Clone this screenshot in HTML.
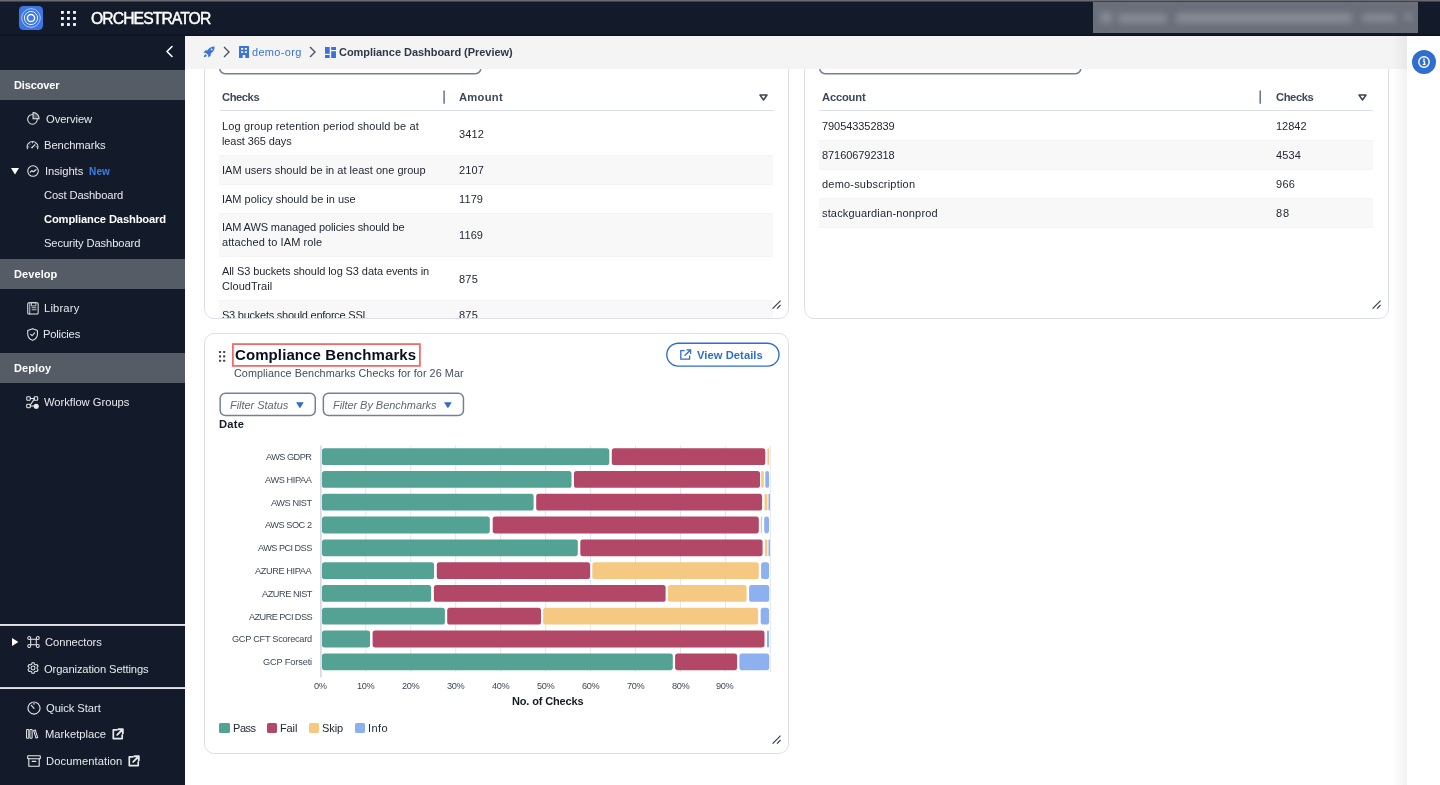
<!DOCTYPE html>
<html><head><meta charset="utf-8"><title>Orchestrator - Compliance Dashboard</title>
<style>
*{box-sizing:border-box;margin:0;padding:0}
html,body{width:1440px;height:785px;overflow:hidden;background:#fff;font-family:"Liberation Sans",sans-serif;}
.abs{position:absolute}
#topline{position:absolute;left:0;top:0;width:1440px;height:2px;background:linear-gradient(#67696e 0,#67696e 50%,#3e434d 50%,#3e434d 100%);z-index:5}
#topbar{position:absolute;left:0;top:2px;width:1440px;height:34px;background:#131b2a;z-index:4}
#sidebar{position:absolute;left:0;top:36px;width:184.5px;height:749px;background:#131b2a;z-index:3}
#main{position:absolute;left:184px;top:36px;width:1256px;height:749px;background:#fff;overflow:hidden}
#crumb{position:absolute;left:0;top:0;width:1223px;height:33px;background:#f4f4f4;z-index:2}
.t{position:absolute;white-space:nowrap;line-height:1;will-change:transform}
.sec{position:absolute;left:0;width:184.5px;height:30px;background:#555c66}
.card{position:absolute;border:1px solid #dcdfe6;background:#fff}
</style></head><body>
<div id="topline"></div>
<div id="topbar">
<svg class="abs" style="left:19px;top:4px" width="24" height="24" viewBox="0 0 24 24"><rect width="24" height="24" rx="4.5" fill="#3b75e6"/><g fill="none" stroke="#fff"><circle cx="12" cy="12" r="3.6" stroke-width="1.5"/><circle cx="12" cy="12" r="6.6" stroke-width="0.9"/><circle cx="12" cy="12" r="9.3" stroke-width="0.6"/></g></svg>
<svg class="abs" style="left:61px;top:9px" width="15" height="15" viewBox="0 0 15 15" fill="#fff"><rect x="0" y="0" width="2.8" height="2.8"/><rect x="6.05" y="0" width="2.8" height="2.8"/><rect x="12.1" y="0" width="2.8" height="2.8"/><rect x="0" y="6.05" width="2.8" height="2.8"/><rect x="6.05" y="6.05" width="2.8" height="2.8"/><rect x="12.1" y="6.05" width="2.8" height="2.8"/><rect x="0" y="12.1" width="2.8" height="2.8"/><rect x="6.05" y="12.1" width="2.8" height="2.8"/><rect x="12.1" y="12.1" width="2.8" height="2.8"/></svg>
<div class="t " style="left:90.60px;top:8px;font-size:15.7px;line-height:17px;color:#fff;letter-spacing:-0.901px;-webkit-text-stroke:0.45px #fff;">ORCHESTRATOR</div>
<div class="abs" id="blur" style="left:1092.8px;top:-0.3px;width:325.3px;height:31.4px;background:#6a6f79;overflow:hidden"><div class="abs" style="left:0;top:0;width:100%;height:100%;filter:blur(3px)"><div class="abs" style="left:7px;top:10px;width:12px;height:11px;border-radius:4px;background:#878b94"></div><div class="abs" style="left:25px;top:12px;width:49px;height:9px;border-radius:4px;background:#878b94"></div><div class="abs" style="left:83px;top:11px;width:176px;height:10px;border-radius:4px;background:#878b94"></div><div class="abs" style="left:269px;top:12px;width:34px;height:8px;border-radius:4px;background:#878b94"></div><div class="abs" style="left:312px;top:11px;width:7px;height:8px;border-radius:4px;background:#878b94"></div></div></div>
<div class="abs" style="left:0;top:31.4px;width:1440px;height:2.6px;background:linear-gradient(#131b2a,#0b121e)"></div>
</div>
<div id="sidebar">
<svg class="abs" style="left:165.00px;top:9.00px" width="9.00" height="13.00" viewBox="0 0 9 13" fill="none" stroke="#e9eaec" stroke-width="1.1" stroke-linecap="round" stroke-linejoin="round" ><path d="M7 1.5 L2 6.5 L7 11.5" stroke="#fff" stroke-width="1.6"/></svg>
<div class="sec" style="top:34px"></div>
<div class="t " style="left:14.00px;top:43px;font-size:11px;line-height:12px;color:#fff;letter-spacing:-0.139px;font-weight:bold;">Discover</div>
<svg class="abs" style="left:26.92px;top:76.49px" width="13.95" height="13.02" viewBox="0 0 15 14" fill="none" stroke="#e9eaec" stroke-width="1.1" stroke-linecap="round" stroke-linejoin="round" ><path d="M5.9 2.7 A5.2 5.2 0 1 0 11.1 7.9"/><path d="M6.5 7.2 V0.6 A6.6 6.6 0 0 1 13.1 7.2 Z" fill="rgba(233,234,236,0.28)"/></svg>
<div class="t " style="left:45.60px;top:77px;font-size:11.2px;line-height:12px;color:#e9eaec;letter-spacing:-0.068px;">Overview</div>
<svg class="abs" style="left:26.39px;top:103.88px" width="13.02" height="10.23" viewBox="0 0 14 11" fill="none" stroke="#e9eaec" stroke-width="1.1" stroke-linecap="round" stroke-linejoin="round" ><path d="M1.55 9.4 A5.8 5.8 0 1 1 12.45 9.4"/><path d="M6.7 7.9 L9.5 5.3" stroke-width="1.3"/><circle cx="6.5" cy="8.1" r="0.9" fill="#e9eaec" stroke="none"/><path d="M7 2.3v1M3.4 3.9l.7.7M10.6 3.9l-.7.7M2.1 7.3h1M11.9 7.3h-1" stroke-width="0.8"/></svg>
<div class="t " style="left:44.10px;top:103px;font-size:11.2px;line-height:12px;color:#e9eaec;letter-spacing:-0.072px;">Benchmarks</div>
<svg class="abs" style="left:11px;top:132.4px" width="8" height="6.4" viewBox="0 0 8 6.4"><path d="M0 0H8L4 6.4Z" fill="#fff"/></svg>
<svg class="abs" style="left:27.25px;top:129.06px" width="12.09" height="12.09" viewBox="0 0 13 13" fill="none" stroke="#e9eaec" stroke-width="1.1" stroke-linecap="round" stroke-linejoin="round" ><circle cx="6.5" cy="6.5" r="5.7"/><path d="M3.5 7.7 L5.3 6.1 L6.9 7.2 L9.6 5.1" stroke-width="1.3"/></svg>
<div class="t " style="left:44.80px;top:129px;font-size:11.2px;line-height:12px;color:#e9eaec;letter-spacing:-0.043px;">Insights</div>
<div class="t " style="left:88.80px;top:130px;font-size:10px;line-height:11px;color:#3d7fe6;letter-spacing:0.169px;font-weight:bold;">New</div>
<div class="t " style="left:44.40px;top:153px;font-size:11.2px;line-height:12px;color:#e9eaec;letter-spacing:-0.126px;">Cost Dashboard</div>
<div class="t " style="left:44.40px;top:177px;font-size:11.2px;line-height:12px;color:#fff;letter-spacing:-0.147px;font-weight:bold;">Compliance Dashboard</div>
<div class="t " style="left:44.40px;top:201px;font-size:11.2px;line-height:12px;color:#e9eaec;letter-spacing:-0.109px;">Security Dashboard</div>
<div class="sec" style="top:223px"></div>
<div class="t " style="left:14.00px;top:232px;font-size:11px;line-height:12px;color:#fff;letter-spacing:0.085px;font-weight:bold;">Develop</div>
<svg class="abs" style="left:27.05px;top:265.69px" width="12.09" height="13.02" viewBox="0 0 13 14" fill="none" stroke="#e9eaec" stroke-width="1.1" stroke-linecap="round" stroke-linejoin="round" ><rect x="0.8" y="0.8" width="11.2" height="12.2" rx="1.2"/><path d="M3 0.8V13M5.2 0.8h4.4v3.4H5.2z M5.5 6.2h4.2M5.5 8.4h4.2" stroke-width="0.9"/></svg>
<div class="t " style="left:44.20px;top:266px;font-size:11.2px;line-height:12px;color:#e9eaec;letter-spacing:0.178px;">Library</div>
<svg class="abs" style="left:26.62px;top:292.29px" width="11.16" height="13.02" viewBox="0 0 12 14" fill="none" stroke="#e9eaec" stroke-width="1.1" stroke-linecap="round" stroke-linejoin="round" ><path d="M6 0.8 L11.2 2.6 V6.6 C11.2 9.8 9 12 6 13.2 C3 12 0.8 9.8 0.8 6.6 V2.6 Z"/><path d="M4 6.8 L5.5 8.3 L8.2 5.2"/></svg>
<div class="t " style="left:43.40px;top:292px;font-size:11.2px;line-height:12px;color:#e9eaec;letter-spacing:-0.185px;">Policies</div>
<div class="sec" style="top:317px"></div>
<div class="t " style="left:14.00px;top:326px;font-size:11px;line-height:12px;color:#fff;letter-spacing:0.105px;font-weight:bold;">Deploy</div>
<svg class="abs" style="left:26.49px;top:360.09px" width="13.02" height="13.02" viewBox="0 0 14 14" fill="none" stroke="#e9eaec" stroke-width="1.1" stroke-linecap="round" stroke-linejoin="round" ><rect x="0.8" y="0.8" width="3.8" height="3.8" rx="0.8"/><rect x="8.8" y="0.8" width="3.8" height="3.8" rx="0.8"/><rect x="0.8" y="8.8" width="3.8" height="3.8" rx="0.8"/><circle cx="11" cy="11" r="2.2" fill="#e9eaec"/><path d="M4.6 2.7H8.8M4.6 10.7H8.8M8.8 3.6L4.6 9.6"/></svg>
<div class="t " style="left:44.20px;top:360px;font-size:11.2px;line-height:12px;color:#e9eaec;letter-spacing:-0.013px;">Workflow Groups</div>
<div class="abs" style="left:0;top:588px;width:184.5px;height:2px;background:linear-gradient(#e2e3e6 0,#e2e3e6 70%,#7d828b 100%)"></div>
<svg class="abs" style="left:11.6px;top:602px" width="6.6" height="8" viewBox="0 0 6.6 8"><path d="M0 0V8L6.6 4Z" fill="#fff"/></svg>
<svg class="abs" style="left:26.89px;top:600.25px" width="13.02" height="12.09" viewBox="0 0 14 13" fill="none" stroke="#e9eaec" stroke-width="1.1" stroke-linecap="round" stroke-linejoin="round" ><rect x="4" y="3.6" width="6" height="5.8"/><circle cx="2.4" cy="2.2" r="1.6"/><circle cx="11.6" cy="2.2" r="1.6"/><circle cx="2.4" cy="10.8" r="1.6"/><circle cx="11.6" cy="10.8" r="1.6"/></svg>
<div class="t " style="left:44.80px;top:600px;font-size:11.2px;line-height:12px;color:#e9eaec;letter-spacing:-0.042px;">Connectors</div>
<svg class="abs" style="left:26.66px;top:626.46px" width="12.09" height="12.09" viewBox="0 0 13 13" fill="none" stroke="#e9eaec" stroke-width="1.1" stroke-linecap="round" stroke-linejoin="round" ><path d="M5.4 0.9h2.2l.45 1.55 1.25.7 1.55-.4 1.1 1.9-1.1 1.15v1.4l1.1 1.15-1.1 1.9-1.55-.4-1.25.7-.45 1.55H5.4l-.45-1.55-1.25-.7-1.55.4-1.1-1.9 1.1-1.15V5.8L1.05 4.65l1.1-1.9 1.55.4 1.25-.7z"/><circle cx="6.5" cy="6.5" r="2.1"/></svg>
<div class="t " style="left:44.20px;top:627px;font-size:11.2px;line-height:12px;color:#e9eaec;letter-spacing:-0.114px;">Organization Settings</div>
<div class="abs" style="left:0;top:651px;width:184.5px;height:2px;background:linear-gradient(#9fa3aa 0,#e2e3e6 35%,#e2e3e6 100%)"></div>
<svg class="abs" style="left:26.50px;top:664.60px" width="14.00" height="14.00" viewBox="0 0 14 14" fill="none" stroke="#e9eaec" stroke-width="1.1" stroke-linecap="round" stroke-linejoin="round" ><path d="M5.4 1.3 A6 6 0 1 0 8.6 1.3"/><path d="M7 0.8v2.4M7 7.4 L4.4 4.4" /></svg>
<div class="t " style="left:45.70px;top:666px;font-size:11.2px;line-height:12px;color:#e9eaec;letter-spacing:-0.059px;">Quick Start</div>
<svg class="abs" style="left:26.47px;top:693.37px" width="12.56" height="9.77" viewBox="0 0 13.5 10.5" fill="none" stroke="#e9eaec" stroke-width="1.1" stroke-linecap="round" stroke-linejoin="round" ><rect x="0.6" y="0.6" width="2.4" height="9.3" rx="0.8"/><rect x="4.2" y="0.6" width="2.4" height="9.3" rx="0.8"/><path d="M8.2 1.6 L10 1 L12.6 9.2 L10.8 9.8 Z"/></svg>
<div class="t " style="left:44.80px;top:692px;font-size:11.2px;line-height:12px;color:#e9eaec;letter-spacing:0.010px;">Marketplace</div>
<svg class="abs" style="left:112.00px;top:692.20px" width="12.00" height="12.00" viewBox="0 0 12 12" fill="none" stroke="#e9eaec" stroke-width="1.1" stroke-linecap="round" stroke-linejoin="round" stroke-linecap="butt" stroke-linejoin="miter"><path d="M5 1.8H1.3V10.6H10.2V7" stroke-width="1.7"/><path d="M6.4 1.2H10.8V5.6M10.4 1.6L5.2 6.8" stroke-width="1.9"/></svg>
<svg class="abs" style="left:26.50px;top:719.40px" width="14.00" height="12.00" viewBox="0 0 14 12" fill="none" stroke="#e9eaec" stroke-width="1.1" stroke-linecap="round" stroke-linejoin="round" ><rect x="0.7" y="0.7" width="12.6" height="3" rx="0.4"/><path d="M1.8 3.7V11.3H12.2V3.7M5.2 6.4H8.8"/></svg>
<div class="t " style="left:45.70px;top:719px;font-size:11.2px;line-height:12px;color:#e9eaec;letter-spacing:0.089px;">Documentation</div>
<svg class="abs" style="left:128.40px;top:718.70px" width="12.00" height="12.00" viewBox="0 0 12 12" fill="none" stroke="#e9eaec" stroke-width="1.1" stroke-linecap="round" stroke-linejoin="round" stroke-linecap="butt" stroke-linejoin="miter"><path d="M5 1.8H1.3V10.6H10.2V7" stroke-width="1.7"/><path d="M6.4 1.2H10.8V5.6M10.4 1.6L5.2 6.8" stroke-width="1.9"/></svg>
</div>
<div id="main">
<div id="crumb">
<svg class="abs" style="left:19px;top:10px" width="12" height="12" viewBox="0 0 12 12"><path d="M11.6 0.4 C8.6 0.3 6.3 1.5 4.6 4.2 L2.2 4.4 L0.5 6.6 L2.9 6.9 L5.1 9.1 L5.4 11.5 L7.6 9.8 L7.8 7.4 C10.5 5.7 11.7 3.4 11.6 0.4 Z M2.6 8.2 C1.5 8.6 1 9.6 0.8 11.2 C2.4 11 3.4 10.5 3.8 9.4 Z" fill="#3b73d9"/><circle cx="8.6" cy="3.4" r="0.9" fill="#f4f4f4"/></svg>
<svg class="abs" style="left:38.599999999999994px;top:10.200000000000003px" width="8" height="12" viewBox="0 0 8 12"><path d="M1 1 L6 6 L1 11" fill="none" stroke="#4a5361" stroke-width="1.4"/></svg>
<svg class="abs" style="left:55px;top:10px" width="10" height="12" viewBox="0 0 10 12"><path d="M0 0.8 Q0 0 0.8 0 H9.2 Q10 0 10 0.8 V12 H6.3 V9 H3.7 V12 H0 Z" fill="#3b73d9"/><g fill="#f4f4f4"><rect x="2" y="2" width="2.2" height="1.7"/><rect x="5.8" y="2" width="2.2" height="1.7"/><rect x="2" y="5.2" width="2.2" height="1.7"/><rect x="5.8" y="5.2" width="2.2" height="1.7"/></g></svg>
<div class="t " style="left:68.30px;top:10px;font-size:11px;line-height:12px;color:#3b73d9;letter-spacing:0.317px;">demo-org</div>
<svg class="abs" style="left:125.19999999999999px;top:10.200000000000003px" width="8" height="12" viewBox="0 0 8 12"><path d="M1 1 L6 6 L1 11" fill="none" stroke="#4a5361" stroke-width="1.4"/></svg>
<svg class="abs" style="left:141px;top:10.600000000000001px" width="11" height="11.4" viewBox="0 0 11 11.4" fill="#3b73d9"><rect x="0" y="0" width="4.7" height="6.8"/><rect x="0" y="8" width="4.7" height="3.4"/><rect x="6.2" y="0" width="4.8" height="3"/><rect x="6.2" y="4.2" width="4.8" height="7.2"/></svg>
<div class="t " style="left:154.90px;top:10px;font-size:11px;line-height:12px;color:#2d3848;letter-spacing:-0.039px;font-weight:bold;">Compliance Dashboard (Preview)</div>
</div>
<div class="abs" style="left:1208px;top:0;width:15px;height:749px;background:linear-gradient(90deg,rgba(0,0,0,0),rgba(0,0,0,0.05));z-index:2"></div>
<div class="abs" style="left:1223px;top:0;width:33px;height:749px;background:#fff;z-index:2"></div>
<svg class="abs" style="left:1227.5px;top:14.399999999999999px;z-index:3" width="24" height="24" viewBox="0 0 24 24"><circle cx="12" cy="12" r="12" fill="#2f6dd1"/><circle cx="12" cy="12" r="5.2" fill="none" stroke="#fff" stroke-width="1.4"/><circle cx="12" cy="9.5" r="0.95" fill="#fff"/><path d="M10.9 11.4H12.5V14.2M10.7 14.3H13.6" stroke="#fff" stroke-width="1.3" fill="none"/></svg>
<div class="card" style="left:20px;top:4px;width:585px;height:279px;border-radius:0 0 10px 10px;overflow:hidden">
<svg class="abs" style="left:14px;top:9px" width="264" height="26" viewBox="0 0 264 26"><rect x="0.75" y="0.75" width="261.00" height="22.90" rx="5.2" fill="none" stroke="#74809a" stroke-width="1.5"/></svg>
<div class="t " style="left:17.15px;top:50px;font-size:11.2px;line-height:12px;color:#3d4859;letter-spacing:-0.439px;font-weight:bold;">Checks</div>
<svg class="abs" style="left:237px;top:49px" width="4" height="15" viewBox="0 0 4 15"><line x1="2.1" y1="0.6" x2="2.1" y2="13.8" stroke="#66728a" stroke-width="1.5"/></svg>
<div class="t " style="left:254.20px;top:50px;font-size:11.2px;line-height:12px;color:#3d4859;letter-spacing:0.280px;font-weight:bold;">Amount</div>
<svg class="abs" style="left:553.5px;top:52.5px" width="9" height="7" viewBox="0 0 9 7"><path d="M1 1 H8 L4.5 6 Z" fill="none" stroke="#3c4657" stroke-width="1.5" stroke-linejoin="round"/></svg>
<div class="abs" style="left:14.5px;top:69px;width:554.3px;height:1px;background:#dde1e8"></div>
<div class="t " style="left:17.10px;top:79px;font-size:11px;line-height:12px;color:#1d2330;letter-spacing:0.123px;">Log group retention period should be at</div>
<div class="t " style="left:17.10px;top:94px;font-size:11px;line-height:12px;color:#1d2330;letter-spacing:-0.095px;">least 365 days</div>
<div class="t " style="left:254.20px;top:87px;font-size:11px;line-height:12px;color:#1d2330;letter-spacing:0.110px;">3412</div>
<div class="abs" style="left:14px;top:114px;width:554px;height:30px;background:#f8f8f8;border-top:1px solid #f3f4f5;border-bottom:1px solid #f3f4f5"></div>
<div class="t " style="left:17.10px;top:123px;font-size:11px;line-height:12px;color:#1d2330;letter-spacing:0.015px;">IAM users should be in at least one group</div>
<div class="t " style="left:254.20px;top:123px;font-size:11px;line-height:12px;color:#1d2330;letter-spacing:0.110px;">2107</div>
<div class="t " style="left:17.10px;top:152px;font-size:11px;line-height:12px;color:#1d2330;letter-spacing:-0.012px;">IAM policy should be in use</div>
<div class="t " style="left:254.20px;top:152px;font-size:11px;line-height:12px;color:#1d2330;letter-spacing:0.110px;">1179</div>
<div class="abs" style="left:14px;top:172px;width:554px;height:44px;background:#f8f8f8;border-top:1px solid #f3f4f5;border-bottom:1px solid #f3f4f5"></div>
<div class="t " style="left:17.10px;top:180px;font-size:11px;line-height:12px;color:#1d2330;letter-spacing:-0.106px;">IAM AWS managed policies should be</div>
<div class="t " style="left:17.10px;top:195px;font-size:11px;line-height:12px;color:#1d2330;letter-spacing:0.093px;">attached to IAM role</div>
<div class="t " style="left:254.20px;top:188px;font-size:11px;line-height:12px;color:#1d2330;letter-spacing:0.110px;">1169</div>
<div class="t " style="left:17.10px;top:224px;font-size:11px;line-height:12px;color:#1d2330;letter-spacing:-0.090px;">All S3 buckets should log S3 data events in</div>
<div class="t " style="left:17.10px;top:239px;font-size:11px;line-height:12px;color:#1d2330;letter-spacing:0.052px;">CloudTrail</div>
<div class="t " style="left:254.20px;top:232px;font-size:11px;line-height:12px;color:#1d2330;letter-spacing:0.223px;">875</div>
<div class="abs" style="left:14px;top:259px;width:554px;height:30px;background:#f8f8f8;border-top:1px solid #f3f4f5;border-bottom:1px solid #f3f4f5"></div>
<div class="t " style="left:17.10px;top:268px;font-size:11px;line-height:12px;color:#1d2330;letter-spacing:-0.246px;">S3 buckets should enforce SSL</div>
<div class="t " style="left:254.20px;top:268px;font-size:11px;line-height:12px;color:#1d2330;letter-spacing:0.223px;">875</div>
<svg class="abs" style="left:567px;top:259px" width="9.2" height="9.2" viewBox="0 0 9.2 9.2"><path d="M0.6 8.6 L8.6 0.6 M5 8.6 L8.6 5" stroke="#3c4657" stroke-width="1.3" fill="none"/></svg>
</div>
<div class="card" style="left:620px;top:4px;width:585px;height:279px;border-radius:0 0 10px 10px;overflow:hidden">
<svg class="abs" style="left:14px;top:9px" width="264" height="26" viewBox="0 0 264 26"><rect x="0.75" y="0.75" width="261.00" height="22.90" rx="5.2" fill="none" stroke="#74809a" stroke-width="1.5"/></svg>
<div class="t " style="left:16.90px;top:50px;font-size:11.2px;line-height:12px;color:#3d4859;letter-spacing:-0.183px;font-weight:bold;">Account</div>
<svg class="abs" style="left:453px;top:49px" width="4" height="15" viewBox="0 0 4 15"><line x1="2.2" y1="0.6" x2="2.2" y2="13.8" stroke="#66728a" stroke-width="1.5"/></svg>
<div class="t " style="left:470.60px;top:50px;font-size:11.2px;line-height:12px;color:#3d4859;letter-spacing:-0.409px;font-weight:bold;">Checks</div>
<svg class="abs" style="left:553.2px;top:52.5px" width="9" height="7" viewBox="0 0 9 7"><path d="M1 1 H8 L4.5 6 Z" fill="none" stroke="#3c4657" stroke-width="1.5" stroke-linejoin="round"/></svg>
<div class="abs" style="left:14.299999999999955px;top:69px;width:553.6px;height:1px;background:#dde1e8"></div>
<div class="t " style="left:17.20px;top:79px;font-size:11px;line-height:12px;color:#1d2330;letter-spacing:-0.065px;">790543352839</div>
<div class="t " style="left:470.60px;top:79px;font-size:11px;line-height:12px;color:#1d2330;letter-spacing:0.003px;">12842</div>
<div class="abs" style="left:14px;top:99px;width:554px;height:30px;background:#f8f8f8;border-top:1px solid #f3f4f5;border-bottom:1px solid #f3f4f5"></div>
<div class="t " style="left:17.20px;top:108px;font-size:11px;line-height:12px;color:#1d2330;letter-spacing:-0.065px;">871606792318</div>
<div class="t " style="left:470.60px;top:108px;font-size:11px;line-height:12px;color:#1d2330;letter-spacing:0.110px;">4534</div>
<div class="t " style="left:17.20px;top:137px;font-size:11px;line-height:12px;color:#1d2330;letter-spacing:0.195px;">demo-subscription</div>
<div class="t " style="left:470.60px;top:137px;font-size:11px;line-height:12px;color:#1d2330;letter-spacing:0.273px;">966</div>
<div class="abs" style="left:14px;top:157px;width:554px;height:30px;background:#f8f8f8;border-top:1px solid #f3f4f5;border-bottom:1px solid #f3f4f5"></div>
<div class="t " style="left:17.20px;top:166px;font-size:11px;line-height:12px;color:#1d2330;letter-spacing:0.154px;">stackguardian-nonprod</div>
<div class="t " style="left:470.60px;top:166px;font-size:11px;line-height:12px;color:#1d2330;letter-spacing:0.765px;">88</div>
<svg class="abs" style="left:567px;top:259px" width="9.2" height="9.2" viewBox="0 0 9.2 9.2"><path d="M0.6 8.6 L8.6 0.6 M5 8.6 L8.6 5" stroke="#3c4657" stroke-width="1.3" fill="none"/></svg>
</div>
<div class="card" style="left:20px;top:297px;width:585px;height:421px;border-radius:10px;overflow:hidden">
<svg class="abs" style="left:14.400000000000006px;top:16.600000000000023px" width="7" height="11" viewBox="0 0 7 11" fill="#3c4657"><rect x="0" y="0" width="2.1" height="2.1" rx="0.5"/><rect x="4.1" y="0" width="2.1" height="2.1" rx="0.5"/><rect x="0" y="4.35" width="2.1" height="2.1" rx="0.5"/><rect x="4.1" y="4.35" width="2.1" height="2.1" rx="0.5"/><rect x="0" y="8.7" width="2.1" height="2.1" rx="0.5"/><rect x="4.1" y="8.7" width="2.1" height="2.1" rx="0.5"/></svg>
<svg class="abs" style="left:27px;top:9px" width="190" height="25" viewBox="0 0 190 25"><rect x="0.90" y="1.10" width="187.00" height="21.80" rx="0" fill="none" stroke="#f26b6b" stroke-width="1.8"/></svg>
<div class="t " style="left:29.50px;top:12px;font-size:15px;line-height:17px;color:#0a0f1e;letter-spacing:0.093px;font-weight:bold;">Compliance Benchmarks</div>
<div class="t " style="left:29.40px;top:33px;font-size:10.8px;line-height:12px;color:#414c5c;letter-spacing:0.065px;">Compliance Benchmarks Checks for for 26 Mar</div>
<svg class="abs" style="left:461px;top:8px" width="115" height="26" viewBox="0 0 115 26"><rect x="0.80" y="1.20" width="112.20" height="22.90" rx="11.5" fill="none" stroke="#2f6dd1" stroke-width="1.4"/></svg>
<svg class="abs" style="left:475.20000000000005px;top:15.399999999999977px" width="11.4" height="11" viewBox="0 0 11.4 11" fill="none" stroke="#2f6dd1" stroke-width="1.3"><path d="M4.6 1.6H0.8V10.2H9.6V6.6"/><path d="M6.4 0.8H10.6V5M10.4 1L4.6 6.8"/></svg>
<div class="t " style="left:492.30px;top:15px;font-size:11.2px;line-height:12px;color:#2f6dd1;letter-spacing:0.058px;font-weight:bold;">View Details</div>
<svg class="abs" style="left:14px;top:58px" width="98" height="26" viewBox="0 0 98 26"><rect x="1.15" y="1.15" width="95.10" height="22.40" rx="5.2" fill="none" stroke="#74809a" stroke-width="1.5"/></svg>
<div class="t " style="left:25.30px;top:65px;font-size:11px;line-height:12px;color:#5f6875;letter-spacing:-0.032px;font-style:italic;">Filter Status</div>
<svg class="abs" style="left:91.10000000000002px;top:67.5px" width="7.8" height="6.2" viewBox="0 0 7.8 6.2"><path d="M0.5 0.3 H7.3 Q7.8 0.3 7.5 0.8 L4.3 5.8 Q3.9 6.3 3.5 5.8 L0.3 0.8 Q0 0.3 0.5 0.3Z" fill="#2f6dd1"/></svg>
<svg class="abs" style="left:117px;top:58px" width="144" height="26" viewBox="0 0 144 26"><rect x="1.35" y="1.15" width="140.10" height="22.40" rx="5.2" fill="none" stroke="#74809a" stroke-width="1.5"/></svg>
<div class="t " style="left:128.10px;top:65px;font-size:11px;line-height:12px;color:#5f6875;letter-spacing:-0.054px;font-style:italic;">Filter By Benchmarks</div>
<svg class="abs" style="left:239.3px;top:67.5px" width="7.8" height="6.2" viewBox="0 0 7.8 6.2"><path d="M0.5 0.3 H7.3 Q7.8 0.3 7.5 0.8 L4.3 5.8 Q3.9 6.3 3.5 5.8 L0.3 0.8 Q0 0.3 0.5 0.3Z" fill="#2f6dd1"/></svg>
<div class="t " style="left:14.10px;top:84px;font-size:11.2px;line-height:12px;color:#141a26;letter-spacing:0.241px;font-weight:bold;">Date</div>
<svg class="abs" style="left:95px;top:106px" width="480" height="240" viewBox="300 440 480 240"><defs><clipPath id="pc"><rect x="320" y="440" width="450.2" height="240"/></clipPath></defs><line x1="365.84" y1="445.5" x2="365.84" y2="672.2" stroke="#e3e5ee" stroke-width="1"/><line x1="410.78" y1="445.5" x2="410.78" y2="672.2" stroke="#e3e5ee" stroke-width="1"/><line x1="455.72" y1="445.5" x2="455.72" y2="672.2" stroke="#e3e5ee" stroke-width="1"/><line x1="500.66" y1="445.5" x2="500.66" y2="672.2" stroke="#e3e5ee" stroke-width="1"/><line x1="545.60" y1="445.5" x2="545.60" y2="672.2" stroke="#e3e5ee" stroke-width="1"/><line x1="590.54" y1="445.5" x2="590.54" y2="672.2" stroke="#e3e5ee" stroke-width="1"/><line x1="635.48" y1="445.5" x2="635.48" y2="672.2" stroke="#e3e5ee" stroke-width="1"/><line x1="680.42" y1="445.5" x2="680.42" y2="672.2" stroke="#e3e5ee" stroke-width="1"/><line x1="725.36" y1="445.5" x2="725.36" y2="672.2" stroke="#e3e5ee" stroke-width="1"/><line x1="770.30" y1="445.5" x2="770.30" y2="672.2" stroke="#e3e5ee" stroke-width="1"/><line x1="320.9" y1="445.5" x2="320.9" y2="677.6" stroke="#cfd2df" stroke-width="1.4"/><g clip-path="url(#pc)"><rect x="322.0" y="448.2" width="287.3" height="16.8" rx="2.6" fill="#53a294"/><rect x="611.8" y="448.2" width="153.5" height="16.8" rx="2.6" fill="#b24768"/><rect x="767.4" y="448.2" width="1.7" height="16.8" rx="0.9" fill="#f6c982"/><rect x="322.0" y="471.0" width="249.5" height="16.8" rx="2.6" fill="#53a294"/><rect x="574.0" y="471.0" width="186.0" height="16.8" rx="2.6" fill="#b24768"/><rect x="761.2" y="471.0" width="2.6" height="16.8" rx="1.3" fill="#f6c982"/><rect x="765.3" y="471.0" width="3.7" height="16.8" rx="1.9" fill="#8db0ee"/><rect x="322.0" y="493.8" width="211.6" height="16.8" rx="2.6" fill="#53a294"/><rect x="536.2" y="493.8" width="225.9" height="16.8" rx="2.6" fill="#b24768"/><rect x="764.5" y="493.8" width="2.9" height="16.8" rx="1.4" fill="#f6c982"/><rect x="768.5" y="493.8" width="1.5" height="16.8" rx="0.8" fill="#8db0ee"/><rect x="322.0" y="516.6" width="167.8" height="16.8" rx="2.6" fill="#53a294"/><rect x="492.7" y="516.6" width="266.1" height="16.8" rx="2.6" fill="#b24768"/><rect x="760.9" y="516.6" width="1.2" height="16.8" rx="0.6" fill="#f6c982"/><rect x="764.2" y="516.6" width="4.8" height="16.8" rx="2.4" fill="#8db0ee"/><rect x="322.0" y="539.4" width="255.8" height="16.8" rx="2.6" fill="#53a294"/><rect x="580.3" y="539.4" width="182.3" height="16.8" rx="2.6" fill="#b24768"/><rect x="764.9" y="539.4" width="2.5" height="16.8" rx="1.2" fill="#f6c982"/><rect x="768.5" y="539.4" width="1.5" height="16.8" rx="0.8" fill="#8db0ee"/><rect x="322.0" y="562.2" width="112.1" height="16.8" rx="2.6" fill="#53a294"/><rect x="436.8" y="562.2" width="153.2" height="16.8" rx="2.6" fill="#b24768"/><rect x="592.3" y="562.2" width="166.5" height="16.8" rx="2.6" fill="#f6c982"/><rect x="761.1" y="562.2" width="7.9" height="16.8" rx="2.6" fill="#8db0ee"/><rect x="322.0" y="585.0" width="109.1" height="16.8" rx="2.6" fill="#53a294"/><rect x="433.9" y="585.0" width="231.7" height="16.8" rx="2.6" fill="#b24768"/><rect x="668.0" y="585.0" width="78.6" height="16.8" rx="2.6" fill="#f6c982"/><rect x="749.1" y="585.0" width="20.1" height="16.8" rx="2.6" fill="#8db0ee"/><rect x="322.0" y="607.8" width="122.9" height="16.8" rx="2.6" fill="#53a294"/><rect x="447.2" y="607.8" width="93.8" height="16.8" rx="2.6" fill="#b24768"/><rect x="543.1" y="607.8" width="215.0" height="16.8" rx="2.6" fill="#f6c982"/><rect x="760.7" y="607.8" width="8.3" height="16.8" rx="2.6" fill="#8db0ee"/><rect x="322.0" y="630.6" width="48.1" height="16.8" rx="2.6" fill="#53a294"/><rect x="372.6" y="630.6" width="391.9" height="16.8" rx="2.6" fill="#b24768"/><rect x="767.0" y="630.6" width="2.0" height="16.8" rx="1.0" fill="#8db0ee"/><rect x="322.0" y="653.4" width="350.8" height="16.8" rx="2.6" fill="#53a294"/><rect x="675.1" y="653.4" width="62.0" height="16.8" rx="2.6" fill="#b24768"/><rect x="739.4" y="653.4" width="29.8" height="16.8" rx="2.6" fill="#8db0ee"/></g></svg>
<div class="t " style="left:61.20px;top:118px;font-size:9.2px;line-height:10px;color:#3d4859;letter-spacing:-0.542px;">AWS GDPR</div>
<div class="t " style="left:59.50px;top:141px;font-size:9.2px;line-height:10px;color:#3d4859;letter-spacing:-0.390px;">AWS HIPAA</div>
<div class="t " style="left:66.00px;top:164px;font-size:9.2px;line-height:10px;color:#3d4859;letter-spacing:-0.424px;">AWS NIST</div>
<div class="t " style="left:60.10px;top:186px;font-size:9.2px;line-height:10px;color:#3d4859;letter-spacing:-0.465px;">AWS SOC 2</div>
<div class="t " style="left:52.80px;top:209px;font-size:9.2px;line-height:10px;color:#3d4859;letter-spacing:-0.562px;">AWS PCI DSS</div>
<div class="t " style="left:50.20px;top:232px;font-size:9.2px;line-height:10px;color:#3d4859;letter-spacing:-0.405px;">AZURE HIPAA</div>
<div class="t " style="left:57.00px;top:255px;font-size:9.2px;line-height:10px;color:#3d4859;letter-spacing:-0.466px;">AZURE NIST</div>
<div class="t " style="left:43.80px;top:278px;font-size:9.2px;line-height:10px;color:#3d4859;letter-spacing:-0.570px;">AZURE PCI DSS</div>
<div class="t " style="left:27.00px;top:300px;font-size:9.2px;line-height:10px;color:#3d4859;letter-spacing:-0.273px;">GCP CFT Scorecard</div>
<div class="t " style="left:58.10px;top:323px;font-size:9.2px;line-height:10px;color:#3d4859;letter-spacing:-0.121px;">GCP Forseti</div>
<div class="t " style="left:109.40px;top:347px;font-size:9.2px;line-height:10px;color:#3d4859;letter-spacing:-0.300px;">0%</div>
<div class="t " style="left:151.93px;top:347px;font-size:9.2px;line-height:10px;color:#3d4859;letter-spacing:-0.300px;">10%</div>
<div class="t " style="left:196.87px;top:347px;font-size:9.2px;line-height:10px;color:#3d4859;letter-spacing:-0.300px;">20%</div>
<div class="t " style="left:241.81px;top:347px;font-size:9.2px;line-height:10px;color:#3d4859;letter-spacing:-0.300px;">30%</div>
<div class="t " style="left:286.75px;top:347px;font-size:9.2px;line-height:10px;color:#3d4859;letter-spacing:-0.300px;">40%</div>
<div class="t " style="left:331.69px;top:347px;font-size:9.2px;line-height:10px;color:#3d4859;letter-spacing:-0.300px;">50%</div>
<div class="t " style="left:376.63px;top:347px;font-size:9.2px;line-height:10px;color:#3d4859;letter-spacing:-0.300px;">60%</div>
<div class="t " style="left:421.57px;top:347px;font-size:9.2px;line-height:10px;color:#3d4859;letter-spacing:-0.300px;">70%</div>
<div class="t " style="left:466.51px;top:347px;font-size:9.2px;line-height:10px;color:#3d4859;letter-spacing:-0.300px;">80%</div>
<div class="t " style="left:511.45px;top:347px;font-size:9.2px;line-height:10px;color:#3d4859;letter-spacing:-0.300px;">90%</div>
<div class="t " style="left:306.60px;top:361px;font-size:11px;line-height:12px;color:#141a26;letter-spacing:-0.146px;font-weight:bold;">No. of Checks</div>
<div class="abs" style="left:14.300000000000011px;top:389px;width:10.6px;height:10.4px;border-radius:1.6px;background:#53a294"></div>
<div class="t " style="left:27.60px;top:388px;font-size:11px;line-height:12px;color:#222833;letter-spacing:-0.452px;">Pass</div>
<div class="abs" style="left:61.80000000000001px;top:389px;width:10.6px;height:10.4px;border-radius:1.6px;background:#b24768"></div>
<div class="t " style="left:75.30px;top:388px;font-size:11px;line-height:12px;color:#222833;letter-spacing:-0.108px;">Fail</div>
<div class="abs" style="left:103.89999999999998px;top:389px;width:10.6px;height:10.4px;border-radius:1.6px;background:#f6c982"></div>
<div class="t " style="left:117.40px;top:388px;font-size:11px;line-height:12px;color:#222833;letter-spacing:-0.066px;">Skip</div>
<div class="abs" style="left:149.89999999999998px;top:389px;width:10.6px;height:10.4px;border-radius:1.6px;background:#8db0ee"></div>
<div class="t " style="left:163.20px;top:388px;font-size:11px;line-height:12px;color:#222833;letter-spacing:0.384px;">Info</div>
<svg class="abs" style="left:567px;top:400.79999999999995px" width="9.2" height="9.2" viewBox="0 0 9.2 9.2"><path d="M0.6 8.6 L8.6 0.6 M5 8.6 L8.6 5" stroke="#3c4657" stroke-width="1.3" fill="none"/></svg>
</div>
</div>
</body></html>
